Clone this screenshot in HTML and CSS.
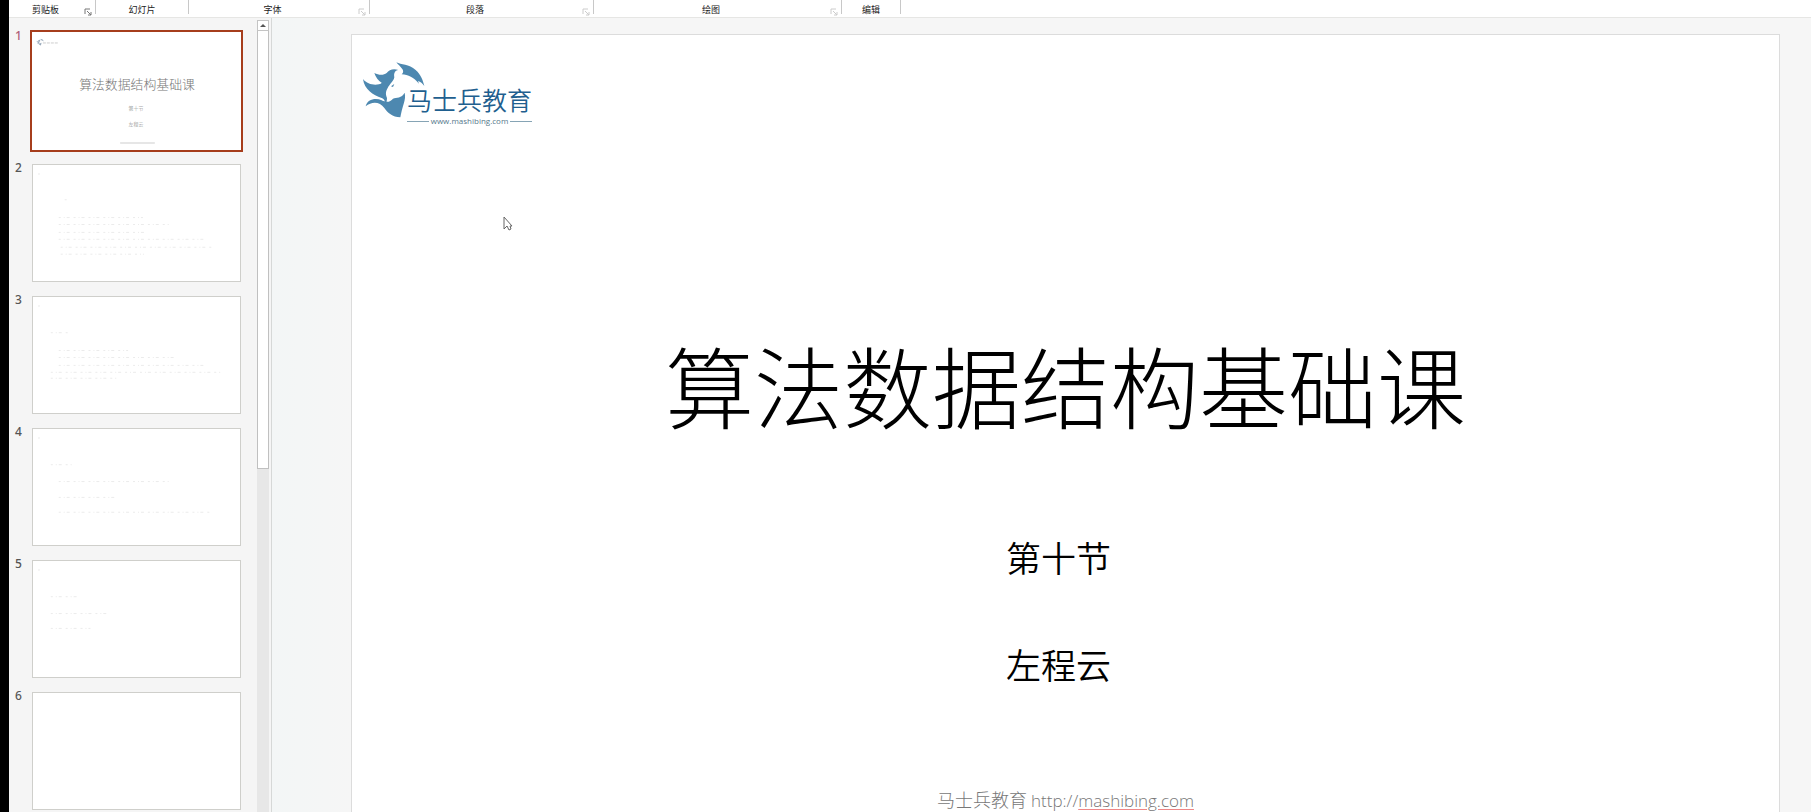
FILE: index.html
```html
<!DOCTYPE html>
<html lang="zh-CN">
<head>
<meta charset="utf-8">
<title>算法数据结构基础课</title>
<link rel="stylesheet" href="styles.css">
</head>
<body>
<svg class="defs" aria-hidden="true">
  <symbol id="launcher" viewBox="0 0 8 8"><path d="M1 6V1h5M3 3l4 4M7 4v3H4" fill="none" stroke="currentColor"/></symbol>
  <symbol id="horse" viewBox="0 0 222 198">
    <path d="M12 69C24 84 42 88 60 85C64 84 67 82 68 80C58 75 50 64 46 51C60 58 74 58 83 51C90 41 104 36 118 42C107 44 104 52 106 64C104 76 92 84 86 96C79 108 80 116 84 126C84 134 82 142 78 148C79 138 78 130 68 126C42 118 16 100 12 69z"/>
    <path d="M112 19C126 27 150 24 170 42C186 56 192 74 196 90C190 82 185 78 177 75L180 83C164 64 148 56 128 55C134 50 134 43 128 37C123 31 118 26 112 19z"/>
    <path d="M20 151C24 130 50 124 68 133C84 141 94 137 102 128C112 124 128 127 137 110C140 122 137 132 135 140C130 156 126 172 124 184C100 183 86 170 76 156C62 136 38 136 20 151z"/>
    <path d="M96 91l10-7-4 9z"/>
  </symbol>
</svg>
<div class="app">
  <header class="ribbon">
    <div class="group clipboard"><span>剪贴板</span><button class="dark" aria-label="剪贴板选项"><svg><use href="#launcher"/></svg></button></div>
    <div class="group slides"><span>幻灯片</span></div>
    <div class="group font"><span>字体</span><button aria-label="字体选项"><svg><use href="#launcher"/></svg></button></div>
    <div class="group paragraph"><span>段落</span><button aria-label="段落选项"><svg><use href="#launcher"/></svg></button></div>
    <div class="group drawing"><span>绘图</span><button aria-label="绘图选项"><svg><use href="#launcher"/></svg></button></div>
    <div class="group editing"><span>编辑</span></div>
  </header>
  <div class="body">
    <nav class="panel">
      <ol class="thumbs">
        <li class="selected"><span>1</span><button aria-label="幻灯片 1"><svg viewBox="0 0 209 117">
          <use href="#horse" class="mini-horse" x="3" y="5" width="9" height="8"/>
          <path class="mini-line" d="M10 10h16" stroke-dasharray="3 1"/>
          <text class="mini-title" x="105" y="56">算法数据结构基础课</text>
          <text class="mini-sub" x="104" y="78">第十节</text>
          <text class="mini-sub" x="104" y="94">左程云</text>
          <path class="mini-line" d="M88 111h35"/>
        </svg></button></li>
        <li><span>2</span><button aria-label="幻灯片 2"><svg viewBox="0 0 209 117">
          <path class="dots" d="M5 9h3M32 35h3M26 53h85M26 60h112M26 68h86M26 75h150M28 83h154M28 90h84"/>
        </svg></button></li>
        <li><span>3</span><button aria-label="幻灯片 3"><svg viewBox="0 0 209 117">
          <path class="dots" d="M5 9h3M18 36h18M26 54h70M26 61h118M26 69h150M18 76h172M18 82h66"/>
        </svg></button></li>
        <li><span>4</span><button aria-label="幻灯片 4"><svg viewBox="0 0 209 117">
          <path class="dots" d="M5 9h3M18 36h22M26 53h112M26 69h56M26 84h152"/>
        </svg></button></li>
        <li><span>5</span><button aria-label="幻灯片 5"><svg viewBox="0 0 209 117">
          <path class="dots" d="M5 9h3M18 36h30M18 53h60M18 68h40"/>
        </svg></button></li>
        <li><span>6</span><button aria-label="幻灯片 6"><svg viewBox="0 0 209 117"></svg></button></li>
      </ol>
      <div class="scrollbar">
        <button class="up" aria-label="向上滚动"><svg viewBox="0 0 6 3"><path d="M0 3l3-3 3 3z"/></svg></button>
        <div class="handle"></div>
      </div>
    </nav>
    <main class="stage">
      <article class="slide">
        <div class="logo">
          <svg class="horse"><use href="#horse"/></svg>
          <div class="brand"><strong>马士兵教育</strong><small>www.mashibing.com</small></div>
        </div>
        <h1>算法数据结构基础课</h1>
        <p>第十节</p>
        <p>左程云</p>
        <footer>马士兵教育 <span>http://<a href="#">mashibing.com</a></span></footer>
      </article>
      <svg class="cursor" viewBox="0 0 10 16"><path d="M1 1v12l3-3 2 4 2-1-1-3h2z"/></svg>
    </main>
  </div>
</div>
</body>
</html>
```
FILE: styles.css
```css
* { box-sizing: border-box; }
body {
  margin: 0;
  background: #000;
  font-family: "Noto Sans", "Noto Sans CJK SC", sans-serif;
}
button { padding: 0; border: 0; background: none; }
svg { display: block; }
.defs { position: absolute; width: 0; height: 0; }

.app {
  display: flex;
  flex-direction: column;
  height: 100vh;
  margin-left: 9px;
  overflow: hidden;
  background: #f5f5f5;
}

/* Ribbon group captions */
.ribbon {
  display: flex;
  flex: none;
  height: 18px;
  background: #fff;
  border-bottom: 1px solid #e6e6e4;
}
.group {
  display: flex;
  align-items: center;
  height: 14px;
  padding-top: 5px;
  border-right: 1px solid #c8c8c8;
  font: 9px/10px "Noto Sans CJK SC", sans-serif;
  color: #222;
}
.group span { flex: 1; text-align: center; }
.group button { width: 13px; padding: 4px 3px 0 2px; color: #ccc; }
.group button.dark { color: #777; }
.group button svg { width: 8px; height: 8px; }
.clipboard { width: 87px; }
.slides { width: 93px; }
.font { width: 181px; }
.paragraph { width: 224px; }
.drawing { width: 248px; }
.editing { width: 59px; }

.body { display: flex; flex: 1; min-height: 0; }

/* Thumbnail panel */
.panel {
  display: flex;
  flex: none;
  width: 263px;
  overflow: hidden;
  border-right: 1px solid #d6d8d7;
}
.thumbs {
  display: flex;
  flex-direction: column;
  gap: 14px;
  flex: 1;
  margin: 0;
  padding: 14px 16px 0 6px;
  list-style: none;
}
.thumbs li { display: flex; gap: 9px; height: 118px; }
.thumbs span {
  width: 8px;
  font-size: 12px;
  font-weight: 500;
  line-height: 7px;
  color: #555;
}
.thumbs button {
  flex: 1;
  height: 118px;
  background: #fff;
  border: 1px solid #cfcfcb;
}
.thumbs svg { width: 100%; height: 100%; }
.thumbs .selected span { color: #b0607a; }
.thumbs .selected button { border-color: #fff; outline: 2px solid #a63d1c; }
.mini-horse { fill: #9ab; }
.mini-line { stroke: #ccc; fill: none; }
.mini-title, .mini-sub {
  font-family: "Noto Sans CJK SC", sans-serif;
  font-weight: 300;
  text-anchor: middle;
  fill: #777;
}
.mini-title { font-size: 13px; }
.mini-sub { font-size: 5px; }
.dots { stroke: #ebebeb; stroke-dasharray: 2 3 1 2 3 4; fill: none; }

.scrollbar {
  display: flex;
  flex-direction: column;
  width: 12px;
  margin: 2px 2px 0 0;
  background: #e7e7e7;
}
.up {
  display: grid;
  place-items: center;
  height: 11px;
  background: #fff;
  border: 1px solid #c4c4c4;
}
.up svg { width: 6px; height: 3px; fill: #555; }
.handle {
  height: 57%;
  max-height: 438px;
  background: #fff;
  border: 1px solid #c0c0c0;
  border-top: 0;
}

/* Editing area */
.stage {
  position: relative;
  flex: 1;
  padding: 16px 31px 0 79px;
  overflow: hidden;
  background: linear-gradient(90deg, #f3f6f6, #f6f6f6 80px);
}
.slide {
  display: flex;
  flex-direction: column;
  aspect-ratio: 16 / 9;
  background: #fff;
  border: 1px solid #dcdcdc;
  font-family: "Noto Sans CJK SC", sans-serif;
  text-align: center;
  color: #000;
}
.logo { display: flex; height: 96px; padding: 21px 0 0 7px; }
.horse { width: 74px; height: 66px; fill: #4d88b0; }
.brand {
  display: flex;
  flex-direction: column;
  width: 125px;
  margin-left: -26px;
  padding-top: 25px;
}
.brand strong { font-size: 25px; line-height: 36px; font-weight: 350; color: #1f5f8f; }
.brand small {
  display: flex;
  align-items: center;
  gap: 2px;
  font: 8px/8px "Open Sans", sans-serif;
  color: #56798c;
}
.brand small::before, .brand small::after { content: ""; flex: 1; height: 1px; background: #86a4b5; }
.slide h1 {
  margin: 205px 0 101px;
  font-size: 89px;
  line-height: 96px;
  font-weight: 300;
}
.slide p {
  margin: 0 14px 59px 0;
  font-size: 35px;
  line-height: 48px;
  font-weight: 350;
}
.slide footer {
  margin-top: 40px;
  font-size: 18px;
  line-height: 24px;
  font-weight: 300;
  color: #777;
}
.slide footer span { font-family: "Open Sans", sans-serif; font-size: 17px; }
.slide footer a { color: inherit; text-decoration: underline #e88; text-underline-offset: 2px; }
.cursor {
  position: absolute;
  left: 231px;
  top: 198px;
  width: 10px;
  height: 16px;
  fill: #fff;
  stroke: #666;
}
```
